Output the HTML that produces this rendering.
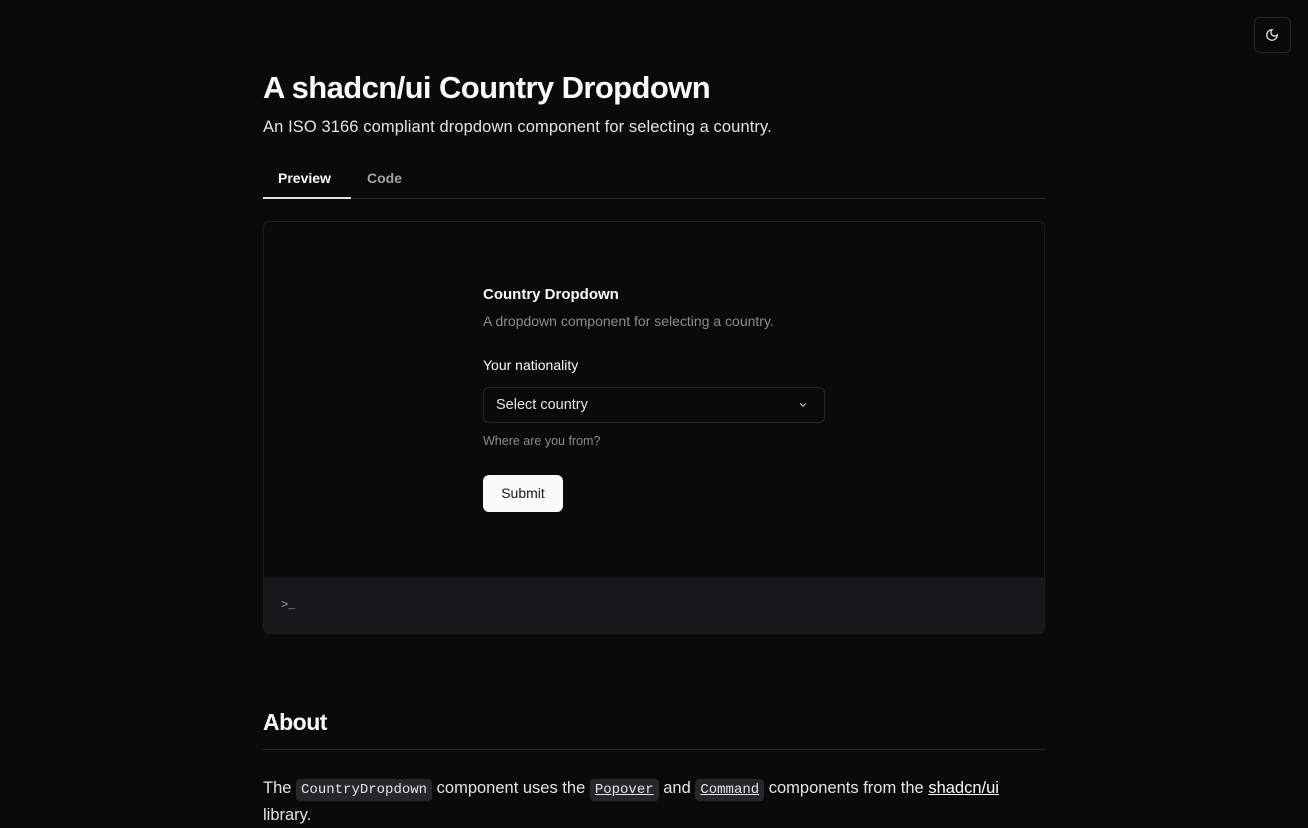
<!DOCTYPE html>
<html><head><meta charset="utf-8"><style>
*{box-sizing:border-box;margin:0;padding:0}
body{width:1308px;height:816px;overflow:hidden;background:#0a0a0a;font-family:"Liberation Sans",sans-serif;color:#fafafa;position:relative}
.abs{position:absolute}
.mono{font-family:"Liberation Mono",monospace}
code{font-family:"Liberation Mono",monospace;font-size:14px;background:#27272a;border-radius:4px;padding:3px 5px;color:#e4e4e7}
</style></head><body>
<div class="abs" style="left:1254px;top:17px;width:37px;height:36px;border:1px solid #27272a;border-radius:6px;"></div>
<svg class="abs" style="left:1265px;top:28px" width="14" height="14" viewBox="0 0 24 24" fill="none" stroke="#e4e4e7" stroke-width="2.2" stroke-linecap="round"><path d="M12 3a6 6 0 0 0 9 9 9 9 0 1 1-9-9Z"/></svg>

<div class="abs" style="left:263px;top:70px;font-size:31px;font-weight:700;letter-spacing:-0.6px">A shadcn/ui Country Dropdown</div>
<div class="abs" style="left:263px;top:118px;font-size:16.5px;letter-spacing:0.1px;color:#e4e4e7">An ISO 3166 compliant dropdown component for selecting a country.</div>
<div class="abs" style="left:278px;top:170px;font-size:14px;font-weight:700">Preview</div>
<div class="abs" style="left:367px;top:170px;font-size:14px;font-weight:700;color:#a1a1aa">Code</div>
<div class="abs" style="left:263px;top:198px;width:782px;height:1px;background:#27272a"></div>
<div class="abs" style="left:263px;top:197px;width:88px;height:2px;background:#e4e4e7"></div>

<div class="abs" style="left:263px;top:221px;width:782px;height:413px;border:1px solid #1f1f22;border-radius:6px;overflow:hidden;background:#0a0a0a">
 <div class="abs" style="left:0;top:355px;width:782px;height:58px;background:#18181b"></div>
 <div class="abs mono" style="left:17px;top:376px;font-size:12px;color:#a1a1aa">&gt;_</div>
</div>
<div class="abs" style="left:483px;top:286px;font-size:15px;font-weight:700">Country Dropdown</div>
<div class="abs" style="left:483px;top:313px;font-size:14px;color:#8b8b93">A dropdown component for selecting a country.</div>
<div class="abs" style="left:483px;top:357px;font-size:14px;font-weight:500">Your nationality</div>
<div class="abs" style="left:483px;top:387px;width:342px;height:36px;border:1px solid #27272a;border-radius:6px"></div>
<div class="abs" style="left:496px;top:397px;font-size:14.5px;color:#e4e4e7">Select country</div>
<svg class="abs" style="left:798px;top:400px" width="10" height="10" viewBox="0 0 24 24" fill="none" stroke="#d4d4d8" stroke-width="2.5" stroke-linecap="round"><path d="m6 9 6 6 6-6"/></svg>
<div class="abs" style="left:483px;top:434px;font-size:12.5px;color:#8b8b93">Where are you from?</div>
<div class="abs" style="left:483px;top:475px;width:80px;height:37px;background:#fafafa;border-radius:6px;color:#18181b;font-size:14px;font-weight:500;text-align:center;line-height:37px">Submit</div>

<div class="abs" style="left:263px;top:709px;font-size:23px;font-weight:700;letter-spacing:-0.5px">About</div>
<div class="abs" style="left:263px;top:749px;width:782px;height:1px;background:#27272a"></div>
<div class="abs" style="left:263px;top:776px;width:782px;font-size:16.5px;line-height:25px;color:#e4e4e7">The <code>CountryDropdown</code> component uses the <code style="text-decoration:underline">Popover</code> and <code style="text-decoration:underline">Command</code> components from the <span style="text-decoration:underline;color:#fafafa;font-weight:500">shadcn/ui</span> library.</div>
</body></html>
